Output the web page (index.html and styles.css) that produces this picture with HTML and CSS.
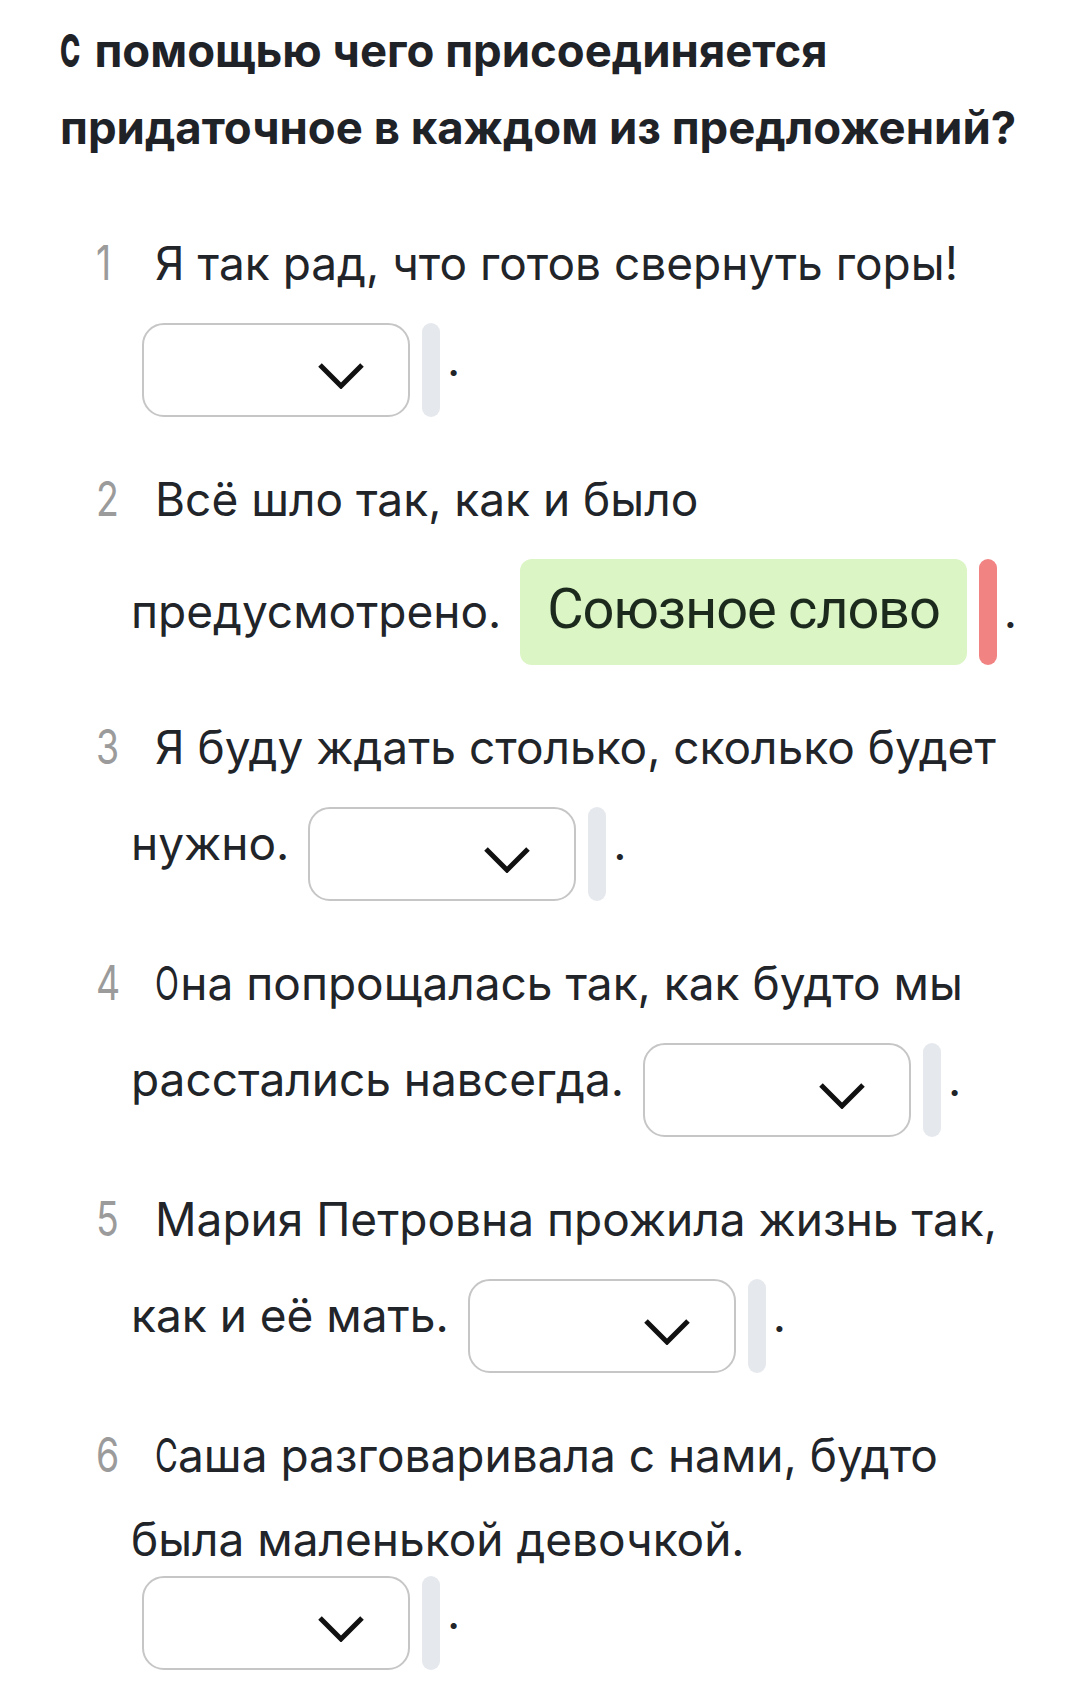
FILE: index.html
```html
<!DOCTYPE html>
<html lang="ru">
<head>
<meta charset="utf-8">
<title>Придаточные предложения</title>
<link rel="stylesheet" href="styles.css">
</head>
<body>
<main class="page">
  <h1 class="title"><span class="cond cond-bold">С</span> помощью чего присоединяется<br>придаточное в каждом из предложений?</h1>
  <ol class="tasks">
    <li class="task">
      <div class="line line-first"><span class="num">1</span><span class="text">Я так рад, что готов свернуть горы!</span></div>
      <div class="line line-answer">
        <span class="answer">
          <span class="select"><svg class="chev" width="46" height="26" viewBox="0 0 46 26"><polyline points="2,2 23,23 44,2" /></svg></span>
          <span class="bar"></span>
        </span><span class="dot">.</span>
      </div>
    </li>
    <li class="task">
      <div class="line line-first"><span class="num">2</span><span class="text">Всё шло так, как и было</span></div>
      <div class="line line-chip">
        <span class="text">предусмотрено.</span>
        <span class="answer">
          <span class="chip">Союзное слово</span>
          <span class="bar bar-wrong"></span>
        </span><span class="dot">.</span>
      </div>
    </li>
    <li class="task">
      <div class="line line-first"><span class="num">3</span><span class="text">Я буду ждать столько, сколько будет</span></div>
      <div class="line line-answer">
        <span class="text">нужно.</span>
        <span class="answer">
          <span class="select"><svg class="chev" width="46" height="26" viewBox="0 0 46 26"><polyline points="2,2 23,23 44,2" /></svg></span>
          <span class="bar"></span>
        </span><span class="dot">.</span>
      </div>
    </li>
    <li class="task">
      <div class="line line-first"><span class="num">4</span><span class="text"><span class="cond cond-o">О</span>на попрощалась так, как будто мы</span></div>
      <div class="line line-answer">
        <span class="text">расстались навсегда.</span>
        <span class="answer">
          <span class="select"><svg class="chev" width="46" height="26" viewBox="0 0 46 26"><polyline points="2,2 23,23 44,2" /></svg></span>
          <span class="bar"></span>
        </span><span class="dot">.</span>
      </div>
    </li>
    <li class="task">
      <div class="line line-first"><span class="num">5</span><span class="text">Мария Петровна прожила жизнь так,</span></div>
      <div class="line line-answer">
        <span class="text">как и её мать.</span>
        <span class="answer">
          <span class="select"><svg class="chev" width="46" height="26" viewBox="0 0 46 26"><polyline points="2,2 23,23 44,2" /></svg></span>
          <span class="bar"></span>
        </span><span class="dot">.</span>
      </div>
    </li>
    <li class="task">
      <div class="line line-first"><span class="num">6</span><span class="text"><span class="cond cond-c">С</span>аша разговаривала с нами, будто</span></div>
      <div class="line"><span class="text">была маленькой девочкой.</span></div>
      <div class="line line-answer">
        <span class="answer">
          <span class="select"><svg class="chev" width="46" height="26" viewBox="0 0 46 26"><polyline points="2,2 23,23 44,2" /></svg></span>
          <span class="bar"></span>
        </span><span class="dot">.</span>
      </div>
    </li>
  </ol>
</main>
</body>
</html>
```

FILE: styles.css
```css
* {
  box-sizing: border-box;
}

body {
  margin: 0;
  background: #ffffff;
  color: #212428;
  font-family: Inter, Roboto, "Liberation Sans", sans-serif;
}

.page {
  padding: 12px 0 40px 60px;
}

.title {
  margin: 0;
  font-family: Inter, Roboto, sans-serif;
  font-weight: 700;
  font-size: 45.5px;
  line-height: 77px;
  color: #1f2328;
  white-space: nowrap;
}

/* narrow letters (rendered in a condensed face in the original) */
.cond {
  display: inline-block;
  transform: scaleX(0.68);
  transform-origin: 0 0;
}

.cond-bold {
  width: 0.52em;
  font-weight: 800;
  transform: scaleX(0.6);
}

.cond-o {
  width: 0.55em;
}

.cond-c {
  width: 0.5em;
}

.tasks {
  list-style: none;
  margin: 73px 0 0;
  padding: 0 0 0 71px;
  display: flex;
  flex-direction: column;
  gap: 58px;
}

.task {
  display: flex;
  flex-direction: column;
  gap: 13px;
}

.line {
  display: flex;
  align-items: flex-start;
  font-size: 46px;
  line-height: 48px;
  white-space: nowrap;
}

.line-first {
  align-items: baseline;
  padding-bottom: 23px;
}

.num {
  flex: none;
  width: 59px;
  margin-left: -35px;
  font-size: 48px;
  line-height: 1;
  color: #9b9b9b;
  transform: scaleX(0.78);
  transform-origin: 0 0;
}

.line-answer .text,
.line-answer .dot {
  margin-top: 12px;
}

.line-chip .text,
.line-chip .dot {
  margin-top: 28px;
}

.answer {
  display: flex;
  align-items: stretch;
  gap: 12px;
  margin-left: 19px;
}

.answer:first-child {
  margin-left: 11px;
}

.select {
  width: 268px;
  height: 94px;
  border: 2px solid #c6c6c6;
  border-radius: 22px;
  background: #ffffff;
  display: flex;
  align-items: center;
  justify-content: flex-end;
  padding: 11px 44px 0 0;
}

.chev polyline {
  fill: none;
  stroke: #111111;
  stroke-width: 5;
  stroke-linejoin: miter;
}

.chip {
  height: 106px;
  padding: 0 27px 6px;
  background: #dbf5c5;
  border-radius: 12px;
  font-family: Roboto, "Liberation Sans", sans-serif;
  font-size: 56px;
  letter-spacing: -1.2px;
  line-height: 100px;
  color: #1b2a1d;
}

.bar {
  width: 18px;
  border-radius: 9px;
  background: #e5e8ec;
}

.bar-wrong {
  background: #f28383;
}

.dot {
  margin-left: 7px;
}
```
